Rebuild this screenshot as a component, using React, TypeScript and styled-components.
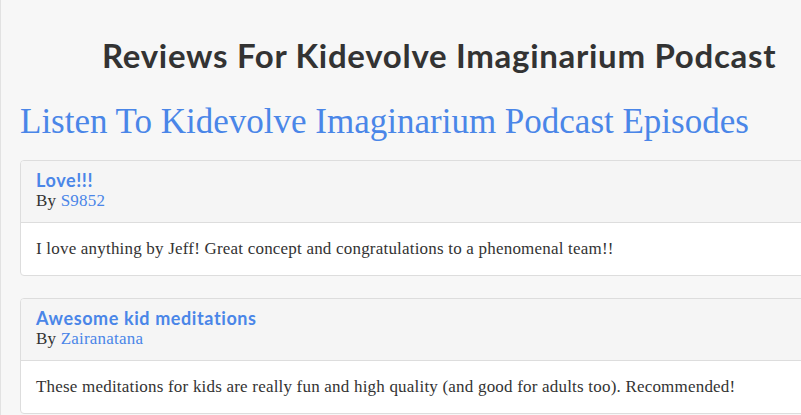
import React from 'react';
import styled, { createGlobalStyle } from 'styled-components';

const GlobalStyle = createGlobalStyle`
  html, body {
    margin: 0;
    padding: 0;
    background: #f7f7f7;
    overflow: hidden;
  }
`;

type Review = {
  title: string;
  author: string;
  text: string;
};

const reviews: Review[] = [
  {
    title: 'Love!!!',
    author: 'S9852',
    text: 'I love anything by Jeff! Great concept and congratulations to a phenomenal team!!',
  },
  {
    title: 'Awesome kid meditations',
    author: 'Zairanatana',
    text: 'These meditations for kids are really fun and high quality (and good for adults too). Recommended!',
  },
];

const Page = styled.div`
  width: 900px;
  min-height: 415px;
  border-left: 1px solid #e2e2e2;
  padding: 0 0 0 19px;
  box-sizing: border-box;
`;

const PageTitle = styled.h1`
  margin: 0;
  padding: 35px 0 0 82px;
  font-family: 'Lato', 'Open Sans', sans-serif;
  font-weight: 700;
  font-size: 33px;
  letter-spacing: 0.7px;
  line-height: 40px;
  color: #333333;
`;

const SubTitle = styled.h2`
  margin: 0;
  padding-top: 25px;
  font-family: 'Liberation Serif', serif;
  font-weight: 400;
  font-size: 35px;
  line-height: 44px;
  color: #4a86e8;
`;

const ReviewList = styled.div`
  display: flex;
  flex-direction: column;
  gap: 22px;
  padding-top: 16px;
`;

const Panel = styled.div`
  background: #ffffff;
  border: 1px solid #dddddd;
  border-radius: 4px;
  overflow: hidden;
`;

const PanelHeading = styled.div`
  background: #f5f5f5;
  border-bottom: 1px solid #dddddd;
  padding: 9px 15px 11px;
`;

const ReviewTitle = styled.h3`
  margin: 0;
  font-family: 'Lato', 'Open Sans', sans-serif;
  font-weight: 700;
  font-size: 18px;
  letter-spacing: 0.6px;
  line-height: 21px;
  color: #4a86e8;
`;

const Byline = styled.div`
  font-family: 'Liberation Serif', serif;
  font-size: 17px;
  letter-spacing: 0.2px;
  line-height: 20px;
  color: #333333;
`;

const AuthorLink = styled.a`
  color: #4a86e8;
  text-decoration: none;
`;

const PanelBody = styled.div`
  padding: 15px 15px 16px;
  font-family: 'Liberation Serif', serif;
  font-size: 17px;
  letter-spacing: 0.2px;
  line-height: 21px;
  color: #333333;
`;

export default function App() {
  return (
    <>
      <GlobalStyle />
      <Page>
        <PageTitle>Reviews For Kidevolve Imaginarium Podcast</PageTitle>
        <SubTitle>Listen To Kidevolve Imaginarium Podcast Episodes</SubTitle>
        <ReviewList>
          {reviews.map((review, i) => (
            <Panel key={i}>
              <PanelHeading>
                <ReviewTitle>{review.title}</ReviewTitle>
                <Byline>
                  By <AuthorLink href="#">{review.author}</AuthorLink>
                </Byline>
              </PanelHeading>
              <PanelBody>{review.text}</PanelBody>
            </Panel>
          ))}
        </ReviewList>
      </Page>
    </>
  );
}
